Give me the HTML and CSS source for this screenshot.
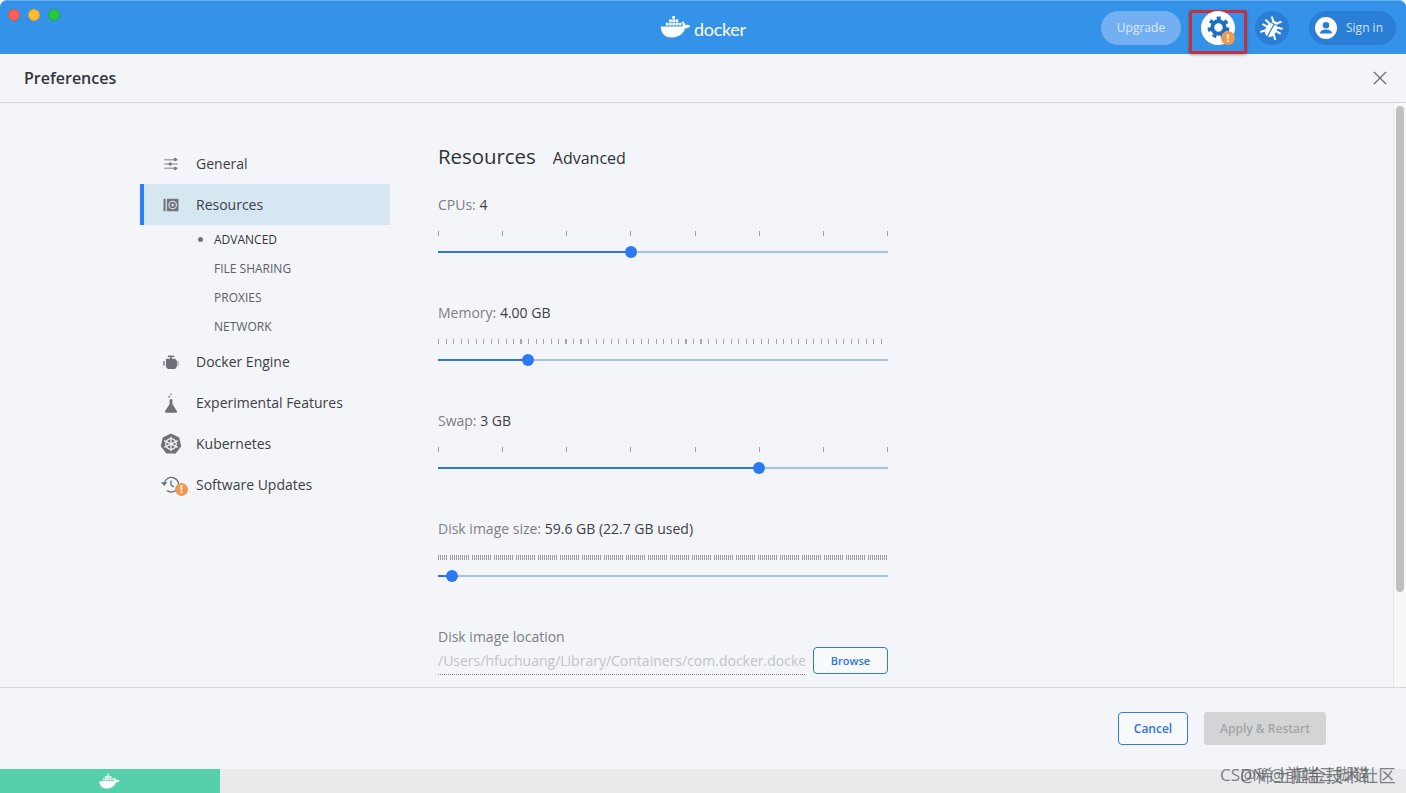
FILE: index.html
```html
<!DOCTYPE html>
<html lang="en">
<head>
<meta charset="utf-8">
<title>Docker Preferences</title>
<link rel="stylesheet" href="styles.css">
</head>
<body>
<div class="app">
  <header class="topbar">
    <div class="lights"><i class="light red"></i><i class="light amber"></i><i class="light green"></i></div>
    <div class="logo">
      <svg class="whale" viewBox="0 0 32 22" width="34" height="23">
        <g fill="#fff">
          <rect x="11.500" y="1" width="2.600" height="2.600"/>
          <rect x="8.400" y="4.200" width="2.600" height="2.600"/><rect x="11.500" y="4.200" width="2.600" height="2.600"/><rect x="14.600" y="4.200" width="2.600" height="2.600"/>
          <rect x="5.300" y="7.400" width="2.600" height="2.600"/><rect x="8.400" y="7.400" width="2.600" height="2.600"/><rect x="11.500" y="7.400" width="2.600" height="2.600"/><rect x="14.600" y="7.400" width="2.600" height="2.600"/><rect x="17.700" y="7.400" width="2.600" height="2.600"/>
          <path d="M0.600 11h20.600c.6-1.600.2-3.200-.6-4.400l.8-.6c1.400 1 2.200 2.200 2.400 3.600 1.600-.5 3.400-.3 4.800.7-.9 1.900-2.800 2.700-5 2.600C22 18 17.600 21.500 11 21.500 4 21.500 .2 17 .6 11z"/>
        </g>
      </svg>
      <span class="wordmark">docker</span>
    </div>
    <div class="actions">
      <span class="upgrade">Upgrade</span>
      <span class="gear-frame">
        <span class="round white">
          <svg viewBox="0 0 24 24" width="23" height="23"><g fill="none" stroke="#1d6fc4"><circle cx="12" cy="12" r="6.500" stroke-width="4.200"/><circle cx="12" cy="12" r="9.600" stroke-width="3.600" stroke-dasharray="4.100 4.520"/></g></svg>
          <b class="warn small">!</b>
        </span>
      </span>
      <span class="round dark">
        <svg viewBox="0 0 24 24" width="24" height="24">
          <g transform="rotate(28 12 12)">
            <g stroke="#fff" stroke-width="2" fill="none" stroke-linecap="round" stroke-linejoin="round">
              <path d="M9.500 5 7 2.500M14.500 5 17 2.500"/>
              <path d="M7 9 3 8M7 13H2.500M7.500 17 4 20.500"/>
              <path d="M17 9l4-1M17 13h4.500M16.500 17l3.500 3.500"/>
            </g>
            <path fill="#fff" d="M12 4.500c1.800 0 3 1.200 3.300 2.500H8.700C9 5.700 10.200 4.500 12 4.500z"/>
            <path fill="#fff" d="M11.400 8v13.500C8.500 21 6.500 18 6.500 14c0-2.500.6-4.700 1.600-6zM12.600 8v13.500c2.900-.5 4.900-3.500 4.900-7.500 0-2.500-.6-4.700-1.600-6z"/>
          </g>
        </svg>
      </span>
      <span class="signin">
        <span class="avatar">
          <svg viewBox="0 0 22 22" width="22" height="22"><circle cx="11" cy="11" r="11" fill="#fff"/><circle cx="11" cy="8.200" r="3.300" fill="#2a7ed6"/><path fill="#2a7ed6" d="M5 16.500c0-2.800 3-4 6-4s6 1.200 6 4z"/></svg>
        </span>
        <span class="signin-text">Sign in</span>
      </span>
    </div>
  </header>

  <div class="titlebar">
    <h1 class="title">Preferences</h1>
    <svg class="close" viewBox="0 0 14 14" width="14" height="14"><path d="M1 1l12 12M13 1 1 13" stroke="#6a6e73" stroke-width="1.300" fill="none"/></svg>
  </div>

  <main class="main">
    <nav class="sidebar">
      <a class="nav-item">
        <svg class="nav-icon" viewBox="0 0 24 24" width="20" height="20"><g stroke="#7a7e84" stroke-width="1.200" fill="#7a7e84"><path d="M4 7h16M4 12h16M4 17h16"/><circle cx="17" cy="6.500" r="1.500"/><circle cx="11" cy="12" r="1.500"/><circle cx="17" cy="17.500" r="1.500"/></g></svg>
        General
      </a>
      <a class="nav-item active">
        <svg class="nav-icon" viewBox="0 0 24 24" width="20" height="20"><rect x="3" y="4.500" width="2.500" height="15" fill="#72767c"/><rect x="7" y="4.500" width="14" height="15" rx="1" fill="#72767c"/><circle cx="14" cy="12" r="4.500" fill="none" stroke="#d7e7f2" stroke-width="1.300"/><circle cx="14" cy="12" r="1.500" fill="#d7e7f2"/></svg>
        Resources
      </a>
      <ul class="subnav">
        <li class="sub-item current">ADVANCED</li>
        <li class="sub-item">FILE SHARING</li>
        <li class="sub-item">PROXIES</li>
        <li class="sub-item">NETWORK</li>
      </ul>
      <a class="nav-item">
        <svg class="nav-icon" viewBox="0 0 24 24" width="22" height="22"><g fill="#6d7177"><rect x="8.500" y="5" width="7" height="1.600"/><rect x="11" y="6" width="2" height="3"/><path d="M6.500 8.500h10l2 2.500v6l-2 2.500h-8l-2-2z"/><rect x="3.500" y="11" width="1.500" height="5"/><rect x="19" y="11" width="1.500" height="5" opacity=".6"/></g></svg>
        Docker Engine
      </a>
      <a class="nav-item">
        <svg class="nav-icon" viewBox="0 0 24 24" width="22" height="22"><path fill="#6d7177" d="M10.500 8h3v5l5 8a1 1 0 0 1-1 1.500H6.500a1 1 0 0 1-1-1.500l5-8z"/><circle cx="10" cy="5" r="1" fill="#6d7177"/><circle cx="12" cy="2.500" r=".8" fill="#6d7177"/></svg>
        Experimental Features
      </a>
      <a class="nav-item">
        <svg class="nav-icon kube" viewBox="0 0 24 24" width="23" height="23"><path fill="#6d7177" d="M12 1l8.600 4.100 2.100 9.300-5.900 7.500H7.200l-5.900-7.500 2.100-9.300z"/><g stroke="#f4f5f8" stroke-width="1.300" fill="none"><circle cx="12" cy="12" r="5.500"/><path d="M12 4.500v15M5 8.500l14 7M19 8.500l-14 7"/></g></svg>
        Kubernetes
      </a>
      <a class="nav-item">
        <svg class="nav-icon" viewBox="0 0 24 24" width="22" height="22"><g fill="none" stroke="#6d7177" stroke-width="1.500"><path d="M4.500 10.500a8 8 0 1 1 3 7.500"/><path d="M12 7v5l3 2"/></g><path fill="#6d7177" d="M1 9h7l-3.500 4z"/></svg>
        <b class="warn nav-warn">!</b>
        Software Updates
      </a>
    </nav>

    <section class="content">
      <div class="heading"><h2 class="heading-main">Resources</h2><span class="heading-sub">Advanced</span></div>

      <div class="field">
        <div class="label">CPUs: <span class="value">4</span></div>
        <div class="ticks ticks-few"><i></i><i></i><i></i><i></i><i></i><i></i><i></i><i></i></div>
        <div class="track"><div class="fill" style="width:193px"></div></div>
      </div>
      <div class="field">
        <div class="label">Memory: <span class="value">4.00 GB</span></div>
        <div class="ticks ticks-mem"></div>
        <div class="track"><div class="fill" style="width:90px"></div></div>
      </div>
      <div class="field">
        <div class="label">Swap: <span class="value">3 GB</span></div>
        <div class="ticks ticks-few"><i></i><i></i><i></i><i></i><i></i><i></i><i></i><i></i></div>
        <div class="track"><div class="fill" style="width:321px"></div></div>
      </div>
      <div class="field">
        <div class="label">Disk image size: <span class="value">59.6 GB (22.7 GB used)</span></div>
        <div class="ticks ticks-disk"></div>
        <div class="track"><div class="fill" style="width:14px"></div></div>
      </div>

      <div class="location">
        <div class="label">Disk image location</div>
        <div class="location-row">
          <span class="path">/Users/hfuchuang/Library/Containers/com.docker.docke</span>
          <span class="btn btn-small">Browse</span>
        </div>
      </div>
    </section>

    <div class="scrollbar"><div class="scroll-thumb"></div></div>
  </main>

  <footer class="footer">
    <span class="btn btn-cancel">Cancel</span>
    <span class="btn-disabled">Apply &amp; Restart</span>
  </footer>

  <div class="status">
    <div class="status-green">
      <svg viewBox="0 0 32 22" width="23" height="16"><g fill="#fff"><rect x="11.500" y="1" width="2.600" height="2.600"/><rect x="8.400" y="4.200" width="2.600" height="2.600"/><rect x="11.500" y="4.200" width="2.600" height="2.600"/><rect x="14.600" y="4.200" width="2.600" height="2.600"/><rect x="5.300" y="7.400" width="2.600" height="2.600"/><rect x="8.400" y="7.400" width="2.600" height="2.600"/><rect x="11.500" y="7.400" width="2.600" height="2.600"/><rect x="14.600" y="7.400" width="2.600" height="2.600"/><rect x="17.700" y="7.400" width="2.600" height="2.600"/><path d="M0.600 11h20.600c.6-1.600.2-3.200-.6-4.400l.8-.6c1.400 1 2.200 2.200 2.400 3.600 1.600-.5 3.400-.3 4.800.7-.9 1.900-2.800 2.700-5 2.600C22 18 17.600 21.500 11 21.500 4 21.500 .2 17 .6 11z"/></g></svg>
    </div>
    <span class="mark mark-a">CSDN @前端三脚猫</span>
    <span class="mark mark-b">@稀土掘金技术社区</span>
  </div>
</div>
</body>
</html>
```
FILE: styles.css
```css
* { box-sizing: border-box; }
html, body { margin: 0; height: 100%; overflow: hidden; }
body { font-family: "Open Sans", "Noto Sans CJK SC", sans-serif; background: #f4f5f8; color: #3c4046; font-size: 14px; }
.app { width: 1406px; height: 793px; display: flex; flex-direction: column; }

/* top bar */
.topbar { height: 54px; flex: none; background: #3492e8; border-top: 1px solid #69aef0; border-radius: 7px 7px 0 0; display: grid; grid-template-columns: 1fr auto 1fr; align-items: center; }
.lights { display: flex; gap: 8px; padding: 0 0 26px 8px; }
.light { width: 12px; height: 12px; border-radius: 50%; display: block; }
.red { background: #fb5f57; border: 1px solid #de4f4b; }
.amber { background: #fdbb2f; border: 1px solid #dfa12a; }
.green { background: #28c740; border: 1px solid #22a839; }
.logo { display: flex; align-items: flex-end; gap: 0; height: 26px; margin: 0 0 1px 0; }
.whale { display: block; margin-bottom: 2px; }
.wordmark { font-family: Lato, sans-serif; font-size: 18px; line-height: 22px; color: #fff; font-weight: 400; letter-spacing: -.3px; width: 52px; }
.actions { display: flex; align-items: center; justify-content: flex-end; padding-right: 10px; height: 100%; }
.upgrade { width: 80px; height: 34px; border-radius: 17px; background: #74b0f1; color: #dcebfb; font-size: 12px; display: flex; align-items: center; justify-content: center; }
.gear-frame { width: 58px; height: 44px; margin: 8px 8px 0 8px; border: 3px solid #c4303b; border-radius: 3px; display: flex; justify-content: center; box-shadow: 0 1px 3px rgba(30,40,60,.4); }
.round { width: 34px; height: 34px; border-radius: 50%; display: flex; align-items: center; justify-content: center; position: relative; flex: none; }
.gear-frame .round { margin-top: -2px; }
.white { background: #fff; }
.dark { background: #2a7ed6; }
.warn { position: absolute; border-radius: 50%; background: #ec9a4f; color: #fff; font-weight: 700; font-style: normal; text-align: center; }
.warn.small { width: 14px; height: 14px; right: 0; bottom: 0; font-size: 10px; line-height: 14px; }
.signin { width: 87px; height: 34px; margin-left: 20px; border-radius: 17px; background: #2a7ed6; color: #cfe3f8; font-size: 12px; display: flex; align-items: center; padding-left: 6px; }
.avatar { display: block; height: 22px; width: 22px; }
.signin-text { margin-left: 9px; }

/* title */
.titlebar { height: 49px; flex: none; display: flex; align-items: center; justify-content: space-between; border-bottom: 1px solid #d6d7d9; padding: 0 19px 1px 24px; }
.title { margin: 0; font-size: 16px; font-weight: 600; color: #33363b; }

/* main */
.main { flex: 1; min-height: 0; display: flex; overflow: hidden; padding: 40px 0 0 140px; position: relative; }
.sidebar { width: 250px; flex: none; }
.nav-item { height: 41px; display: flex; align-items: center; padding-left: 56px; position: relative; color: #3c4046; }
.nav-icon { position: absolute; left: 30.500px; top: 50%; transform: translate(-50%, -50%); }
.active { background: #d7e7f2; border-left: 4px solid #2c7cf6; padding-left: 52px; }
.active .nav-icon { left: 26.500px; }
.nav-warn { width: 13px; height: 13px; left: 35px; top: 19px; font-size: 10px; line-height: 13px; }
.subnav { list-style: none; margin: 0; padding: 0; }
.sub-item { height: 29px; padding-left: 74px; font-size: 12px; line-height: 29px; color: #5c6066; position: relative; }
.current { color: #33363b; }
.current::before { content: ""; position: absolute; left: 58px; top: 12px; width: 5px; height: 5px; border-radius: 50%; background: #72767b; }

.content { width: 450px; margin-left: 48px; flex: none; }
.heading { display: flex; align-items: baseline; gap: 17px; height: 28px; margin-top: -1px; }
.heading-main { margin: 0; font-size: 20.400px; font-weight: 400; line-height: 28px; color: #2f3237; }
.heading-sub { font-size: 16px; color: #2f3237; }

.field { height: 108px; }
.heading + .field { margin-top: 25px; }
.label { height: 20px; line-height: 20px; color: #7b7f85; }
.value { color: #3c4046; }
.ticks { height: 5px; margin-top: 16px; }
.ticks-few { display: flex; justify-content: space-between; }
.ticks-few i { width: 1px; height: 5px; background: #9a9da1; display: block; }
.ticks-mem { background: repeating-linear-gradient(90deg, #a4a6aa 0 1px, transparent 1px 7.500px); }
.ticks-disk {
  background:
    repeating-linear-gradient(90deg, transparent 0 10px, #f4f5f8 10px 11px),
    repeating-linear-gradient(90deg, #9a9da1 0 1px, transparent 1px 2px);
}
.track { height: 2px; margin-top: 15px; background: #a5c3ea; position: relative; }
.fill { height: 2px; background: #2f74d6; position: relative; }
.fill::after { content: ""; position: absolute; right: -6px; top: -5px; width: 12px; height: 12px; border-radius: 50%; background: #2c79f5; }

.location { height: 60px; }
.location-row { display: flex; justify-content: space-between; align-items: flex-start; }
.path { width: 367px; height: 28px; line-height: 27px; overflow: hidden; white-space: nowrap; color: #c2c4c7; border-bottom: 1px dotted #85888d; }
.btn { border: 1px solid #2f7bd8; border-radius: 4px; color: #2f74d6; font-weight: 600; display: flex; align-items: center; justify-content: center; background: #f8f9fb; }
.btn-small { width: 75px; height: 27px; font-size: 11px; }

.scrollbar { position: absolute; right: 0; top: 0; bottom: 0; width: 13px; border-left: 1px solid #e6e7e9; background: #f8f8f9; }
.scroll-thumb { position: absolute; left: 2px; top: 3px; width: 8px; height: 486px; border-radius: 4px; background: #bfc0c2; }

/* footer */
.footer { height: 82px; flex: none; border-top: 1px solid #d6d7d9; display: flex; justify-content: flex-end; align-items: flex-start; padding: 24px 80px 0 0; gap: 16px; }
.btn-cancel { width: 70px; height: 33px; font-size: 12px; }
.btn-disabled { width: 122px; height: 33px; border-radius: 3px; background: #d3d4d6; color: #a3a5a8; font-size: 12px; font-weight: 600; display: flex; align-items: center; justify-content: center; }

/* status */
.status { height: 24px; flex: none; background: #e9eaec; position: relative; }
.status-green { width: 220px; height: 24px; background: #56d0ac; display: flex; align-items: center; justify-content: center; }
.mark { position: absolute; font-size: 17px; line-height: 20px; color: rgba(90,92,95,.75); white-space: nowrap; top: -4px; }
.mark-a { left: 1220px; }
.mark-b { left: 1240px; font-size: 17.500px; }
```
